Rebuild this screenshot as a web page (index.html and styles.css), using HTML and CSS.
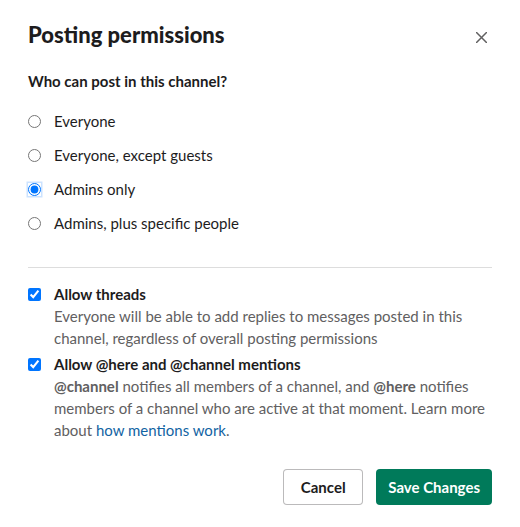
FILE: index.html
```html
<!DOCTYPE html>
<html>
<head>
<meta charset="utf-8">
<link rel="stylesheet" href="styles.css">
</head>
<body>
<div class="dialog">
  <div class="header">
    <h1 class="title">Posting permissions</h1>
    <svg class="close" width="11" height="11" viewBox="0 0 11 11"><path d="M0.5 0.5 L10.5 10.5 M10.5 0.5 L0.5 10.5" stroke="#616061" stroke-width="1.5" stroke-linecap="round"/></svg>
  </div>
  <div class="question">Who can post in this channel?</div>
  <div class="options">
    <label class="radio-row"><input type="radio" name="who" class="radio"><span>Everyone</span></label>
    <label class="radio-row"><input type="radio" name="who" class="radio"><span>Everyone, except guests</span></label>
    <label class="radio-row"><input type="radio" name="who" class="radio" checked><span>Admins only</span></label>
    <label class="radio-row"><input type="radio" name="who" class="radio"><span>Admins, plus specific people</span></label>
  </div>
  <div class="divider"></div>
  <div class="check-item">
    <input type="checkbox" class="check" checked>
    <div class="check-text">
      <div class="check-label">Allow threads</div>
      <div class="check-desc">Everyone will be able to add replies to messages posted in this channel, regardless of overall posting permissions</div>
    </div>
  </div>
  <div class="check-item second">
    <input type="checkbox" class="check" checked>
    <div class="check-text">
      <div class="check-label">Allow @here and @channel mentions</div>
      <div class="check-desc"><b>@channel</b> notifies all members of a channel, and <b>@here</b> notifies members of a channel who are active at that moment. Learn more about <a class="link" href="#">how mentions work</a>.</div>
    </div>
  </div>
  <div class="footer">
    <button class="btn btn-cancel">Cancel</button>
    <button class="btn btn-save">Save Changes</button>
  </div>
</div>
</body>
</html>
```
FILE: styles.css
```css
html, body {
  margin: 0;
  padding: 0;
  background: #ffffff;
}
body {
  font-family: Lato, "Noto Sans", sans-serif;
  color: #1d1c1d;
  font-size: 15px;
  line-height: 22px;
}
.dialog {
  padding: 21px 28px 22px 28px;
}
.header {
  display: flex;
  align-items: center;
  justify-content: space-between;
  height: 28px;
}
.title {
  margin: 0;
  font-size: 22px;
  line-height: 28px;
  font-weight: 900;
}
.close {
  margin-right: 5px;
  margin-top: 5px;
}
.question {
  margin-top: 21px;
  font-weight: 700;
}
.options {
  margin-top: 18px;
  display: flex;
  flex-direction: column;
  gap: 12px;
}
.radio-row {
  display: flex;
  align-items: center;
  gap: 13px;
  height: 22px;
}
.radio {
  margin: 0;
  width: 13px;
  height: 13px;
  accent-color: #0075ff;
}
.radio:checked {
  box-shadow: 0 0 0 1.5px rgba(0, 117, 255, 0.2);
  border-radius: 50%;
}
.divider {
  margin-top: 33px;
  height: 1px;
  background: #dddddd;
}
.check-item {
  margin-top: 15px;
  display: flex;
  gap: 13px;
  align-items: flex-start;
}
.check-item.second {
  margin-top: 4px;
}
.check {
  margin: 5px 0 0 0;
  width: 13px;
  height: 13px;
  accent-color: #0075ff;
}
.check-label {
  font-weight: 700;
}
.check-desc {
  color: #616061;
}
.check-desc b {
  font-weight: 700;
}
.link {
  color: #1264a3;
  text-decoration: none;
}
.footer {
  margin-top: 28px;
  display: flex;
  justify-content: flex-end;
  gap: 13px;
}
.btn {
  height: 36px;
  padding: 0 12px;
  min-width: 80px;
  border-radius: 4px;
  font-family: Lato, "Noto Sans", sans-serif;
  font-size: 15px;
  font-weight: 700;
  cursor: pointer;
}
.btn-cancel {
  background: #ffffff;
  color: #1d1c1d;
  border: 1px solid rgba(29, 28, 29, 0.3);
}
.btn-save {
  background: #007a5a;
  color: #ffffff;
  border: none;
}
```
